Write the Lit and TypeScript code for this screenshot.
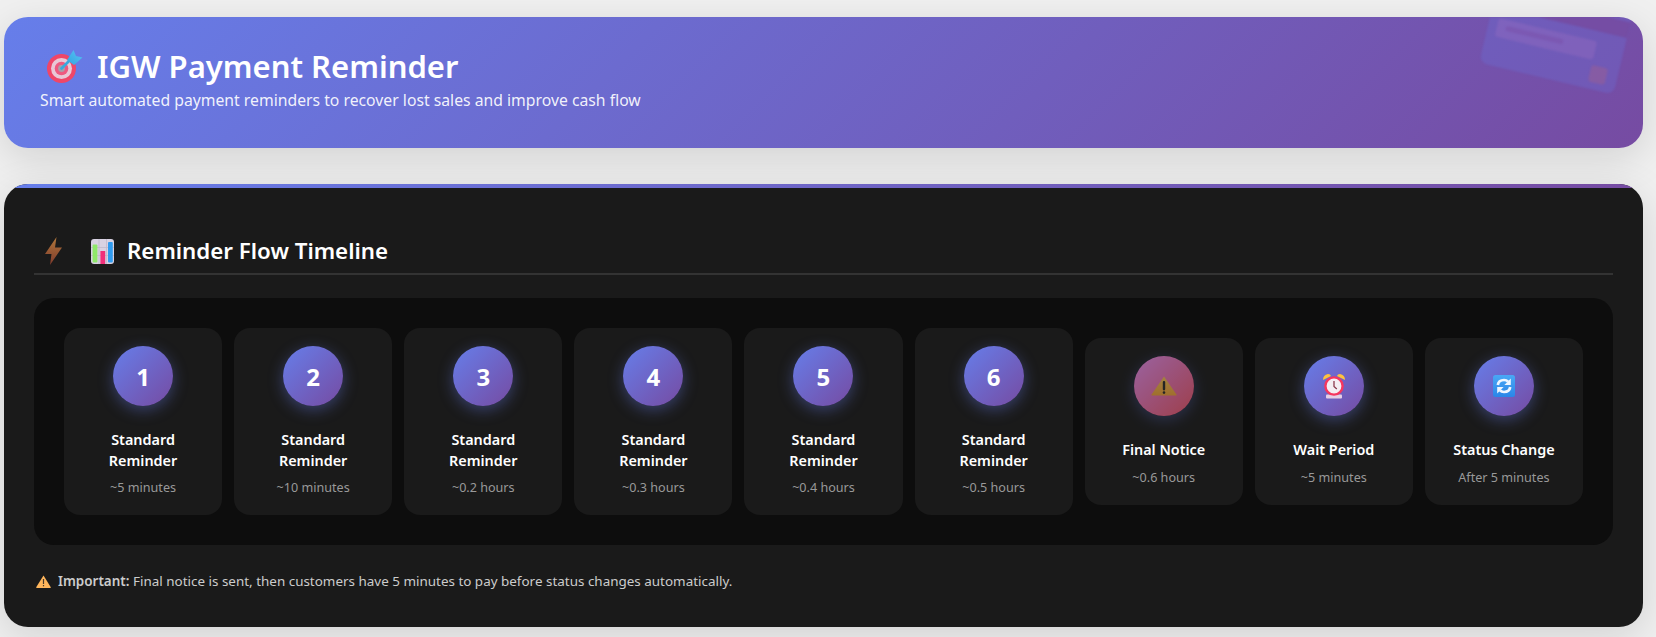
import { LitElement, html, css } from "lit";
import { customElement } from "lit/decorators.js";

const warnIcon = (id: string) => html`<svg class="ico-warn" viewBox="0 0 26 20">
  <defs><linearGradient id=${id} x1="0" y1="0" x2="0" y2="1"><stop offset="0" stop-color="#ffc65c"/><stop offset="1" stop-color="#f9a83a"/></linearGradient></defs>
  <path d="M13 .4 L25.4 18.4 Q25.8 19.6 24.4 19.6 L1.6 19.6 Q.2 19.6 .6 18.4 Z" fill="url(#${id})"/>
  <rect x="11.8" y="5" width="2.4" height="9.4" rx="1.1" fill="#2c2c2c"/><circle cx="13" cy="16.6" r="1.3" fill="#2c2c2c"/>
</svg>`;

const alarmIcon = html`<svg class="ico-alarm" viewBox="0 0 24 26">
  <path d="M1 7 Q1 2 6 1 Q8.5 1 9 3 Z" fill="#ffc23d"/>
  <path d="M23 7 Q23 2 18 1 Q15.5 1 15 3 Z" fill="#ffc23d"/>
  <rect x="4" y="21.5" width="16" height="4" rx="1" fill="#e6cfe6"/>
  <circle cx="12" cy="13" r="8.6" fill="#f4edf2" stroke="#f5365f" stroke-width="2.4"/>
  <path d="M12 8 V13.5 L14.8 16" fill="none" stroke="#8b3b4d" stroke-width="1.3"/>
</svg>`;

const refreshIcon = html`<svg class="ico-refresh" viewBox="0 0 22 22">
  <defs><linearGradient id="rf" x1="0" y1="0" x2="0" y2="1"><stop offset="0" stop-color="#4aa8f5"/><stop offset="1" stop-color="#2a86e8"/></linearGradient></defs>
  <rect width="22" height="22" rx="2.5" fill="url(#rf)"/>
  <path d="M4.8 10 Q5.5 5 11 5 Q13.6 5 15 6.6" fill="none" stroke="#eef6ff" stroke-width="2.7"/>
  <path d="M17.8 3.6 V10 H11.4 Z" fill="#eef6ff"/>
  <path d="M17.2 12 Q16.5 17 11 17 Q8.4 17 7 15.4" fill="none" stroke="#eef6ff" stroke-width="2.7"/>
  <path d="M4.2 18.4 V12 H10.6 Z" fill="#eef6ff"/>
</svg>`;

const warnSmall = html`<svg viewBox="0 0 15 13">
  <path d="M7.5 .4 L14.8 12.2 Q15 12.9 14.2 12.9 H.8 Q0 12.9 .2 12.2 Z" fill="#ffb65c"/>
  <rect x="6.9" y="4" width="1.2" height="5" fill="#4a3a2a"/><rect x="6.9" y="10" width="1.2" height="1.3" fill="#4a3a2a"/>
</svg>`;

const STEPS = [
  { n: "1", t: "Standard Reminder", m: "~5 minutes" },
  { n: "2", t: "Standard Reminder", m: "~10 minutes" },
  { n: "3", t: "Standard Reminder", m: "~0.2 hours" },
  { n: "4", t: "Standard Reminder", m: "~0.3 hours" },
  { n: "5", t: "Standard Reminder", m: "~0.4 hours" },
  { n: "6", t: "Standard Reminder", m: "~0.5 hours" },
  { i: warnIcon("w1"), t: "Final Notice", m: "~0.6 hours", final: true },
  { i: alarmIcon, t: "Wait Period", m: "~5 minutes" },
  { i: refreshIcon, t: "Status Change", m: "After 5 minutes" },
];

@customElement("app-root")
export class AppRoot extends LitElement {
  static styles = css`
    :host {
      display: block;
      box-sizing: border-box;
      height: 637px;
      overflow: hidden;
      padding: 17px 13px 0 4px;
      background: #f0f0f0;
      font-family: "Noto Sans", "Open Sans", "Liberation Sans", sans-serif;
    }
    .hero {
      position: relative;
      overflow: hidden;
      height: 131px;
      box-sizing: border-box;
      padding: 29px 36px 0;
      border-radius: 24px;
      color: #fff;
      background: linear-gradient(135deg, #667eea 0%, #764ba2 100%);
      box-shadow: 0 10px 40px rgba(0, 0, 0, 0.13);
    }
    .deco {
      position: absolute;
      top: 0;
      right: 0;
      width: 200px;
      height: 131px;
      filter: blur(0.8px);
    }
    h1 {
      display: flex;
      align-items: center;
      margin: 0;
      height: 40px;
      font-size: 31px;
      font-weight: 600;
      line-height: 40px;
    }
    .target { width: 46px; height: 40px; margin-right: 11px; flex: none; position: relative; top: 1px; }
    .sub { margin: 2px 0 0; font-size: 15.75px; line-height: 24px; color: rgba(255, 255, 255, 0.92); }
    .panel {
      position: relative;
      overflow: hidden;
      box-sizing: border-box;
      margin-top: 36px;
      height: 443px;
      padding: 52px 30px 0;
      border-radius: 24px;
      background: #1a1a1a;
      box-shadow: 0 10px 40px rgba(0, 0, 0, 0.13);
    }
    .panel::before {
      content: "";
      position: absolute;
      left: 0;
      right: 0;
      top: 0;
      height: 4px;
      background: linear-gradient(90deg, #667eea, #764ba2);
    }
    h2 {
      display: flex;
      align-items: center;
      margin: 0 0 23px;
      height: 30px;
      padding-bottom: 7px;
      border-bottom: 2px solid #333;
      color: #fff;
      font-size: 22.3px;
      font-weight: 600;
      line-height: 30px;
    }
    .bolt { width: 17px; height: 28px; margin-left: 11px; flex: none; }
    .chart { width: 23px; height: 25px; margin: 0 13px 0 29px; flex: none; }
    .flow {
      display: grid;
      grid-template-columns: repeat(9, 1fr);
      gap: 12px;
      align-items: center;
      padding: 30px;
      border-radius: 20px;
      background: #0d0d0d;
    }
    .step {
      display: flex;
      flex-direction: column;
      align-items: center;
      box-sizing: border-box;
      padding: 18px;
      border-radius: 16px;
      background: #1a1a1a;
      text-align: center;
    }
    .dot {
      display: flex;
      align-items: center;
      justify-content: center;
      width: 60px;
      height: 60px;
      margin-bottom: 24px;
      border-radius: 50%;
      background: linear-gradient(135deg, #667eea, #764ba2);
      box-shadow: 0 4px 15px rgba(102, 126, 234, 0.4);
      color: #fff;
      font-size: 24px;
      font-weight: 700;
    }
    .dot.final { background: linear-gradient(135deg, #f093fb, #f5576c); opacity: 0.6; }
    .title { color: #fff; font-size: 14.4px; font-weight: 600; line-height: 20.5px; }
    .meta { margin-top: 7px; color: #999; font-size: 12.6px; line-height: 19px; white-space: nowrap; }
    .ico-warn { width: 26px; height: 20px; }
    .ico-alarm { width: 24px; height: 26px; }
    .ico-refresh { width: 22px; height: 22px; }
    .note {
      display: flex;
      align-items: center;
      margin: 26px 0 0;
      padding-left: 2px;
      color: #ccc;
      font-size: 13.45px;
      line-height: 20px;
      white-space: pre;
    }
    .note svg { width: 15px; height: 13px; margin-right: 7px; flex: none; }
    .note b { font-weight: 600; }
  `;

  render() {
    return html`
      <section class="hero">
        <svg class="deco" viewBox="0 0 200 131">
          <g transform="translate(57 -42) rotate(13.4)">
            <rect width="138" height="90" rx="8" fill="#667eea" opacity="0.24"/>
            <rect y="16" width="138" height="16" fill="#764ba2" opacity="0.9"/>
            <rect x="9" y="42" width="101" height="19" rx="3" fill="#a070c0" opacity="0.32"/>
            <rect x="18" y="48" width="59" height="5" rx="2" fill="#764ba2" opacity="0.4"/>
            <rect x="110" y="66" width="17" height="17" rx="3" fill="#a0608f" opacity="0.45"/>
          </g>
        </svg>
        <h1>
          <svg class="target" viewBox="0 0 46 40">
            <defs>
              <linearGradient id="ar" x1="0" y1="1" x2="1" y2="0"><stop offset="0" stop-color="#31a6e0"/><stop offset="1" stop-color="#5ac0f5"/></linearGradient>
            </defs>
            <circle cx="21.5" cy="21.5" r="14.5" fill="#ef4668"/>
            <circle cx="21.5" cy="21.5" r="10.5" fill="#e9c8d6"/>
            <circle cx="21.5" cy="21.5" r="6.8" fill="#ee5a80"/>
            <circle cx="21.5" cy="21.5" r="3.4" fill="#a9a0aa"/>
            <path d="M21.5 21.5 L33 10" stroke="#39a9df" stroke-width="2.8" stroke-linecap="round"/>
            <path d="M27 13 L33.5 3 L36 9 L42.5 10.5 L34 18 Z" fill="url(#ar)"/>
          </svg>
          IGW Payment Reminder
        </h1>
        <p class="sub">Smart automated payment reminders to recover lost sales and improve cash flow</p>
      </section>
      <section class="panel">
        <h2>
          <svg class="bolt" viewBox="0 0 17 28">
            <defs><linearGradient id="bl" x1="0" y1="0" x2="0" y2="1"><stop offset="0" stop-color="#b0773a"/><stop offset="1" stop-color="#7f3a2c"/></linearGradient></defs>
            <path d="M11.5 0 L0 17 H6.5 L5 28 L17 10.5 H10 Z" fill="url(#bl)"/>
          </svg>
          <svg class="chart" viewBox="0 0 23 25">
            <rect width="23" height="25" rx="3" fill="#d8d2e2"/>
            <path d="M0 8.5H23M0 16.5H23M8 0V25M15.5 0V25" stroke="#bdb6c8" stroke-width=".7"/>
            <rect x="1.6" y="5.5" width="4.8" height="18" rx="1" fill="#8fe86a"/>
            <rect x="9.4" y="12" width="4.8" height="13" fill="#f0307a"/>
            <rect x="17" y="3" width="4.8" height="20.5" rx="1" fill="#2f9bef"/>
          </svg>
          Reminder Flow Timeline
        </h2>
        <div class="flow">
          ${STEPS.map(
            (s) => html`<div class="step">
              <div class="dot ${s.final ? "final" : ""}">${s.n ?? s.i}</div>
              <div class="title">${s.t}</div>
              <div class="meta">${s.m}</div>
            </div>`
          )}
        </div>
        <p class="note">${warnSmall}<b>Important:</b> Final notice is sent, then customers have 5 minutes to pay before status changes automatically.</p>
      </section>
    `;
  }
}
